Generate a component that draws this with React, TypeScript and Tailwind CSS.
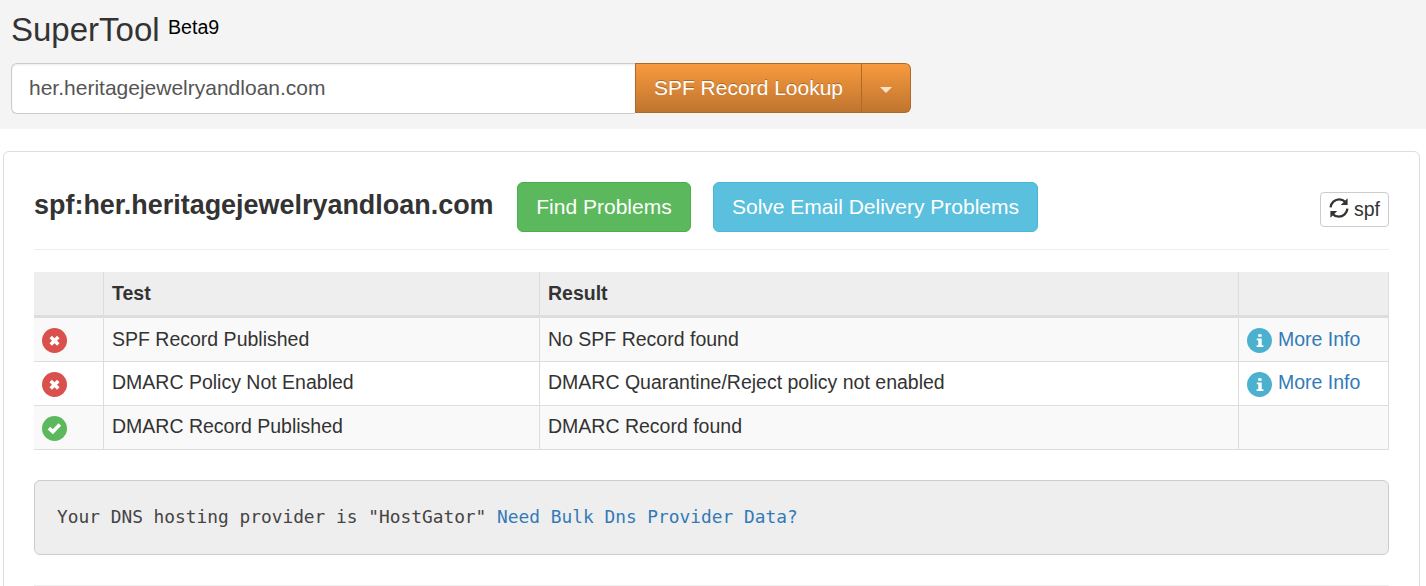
import React from "react";

function ErrorIcon() {
  return (
    <svg className="block size-[25px]" viewBox="0 0 25 25">
      <circle cx="12.5" cy="12.5" r="12.5" fill="#d9504c" />
      <path d="M8.7 8.9L16.3 16.5M16.3 8.9L8.7 16.5" stroke="#fff" strokeWidth="3.5" strokeLinecap="butt" />
    </svg>
  );
}

function SuccessIcon() {
  return (
    <svg className="block size-[25px]" viewBox="0 0 25 25">
      <circle cx="12.5" cy="12.5" r="12.5" fill="#5cb85c" />
      <path d="M6.9 12.1L10.9 15.8L17.8 8.6" fill="none" stroke="#fff" strokeWidth="3.6" />
    </svg>
  );
}

function InfoIcon() {
  return (
    <svg className="block size-[25px] shrink-0" viewBox="0 0 25 25">
      <circle cx="12.5" cy="12.5" r="12.5" fill="#4bb1cf" />
      <path d="M11.2 6.2h3.4v2.6h-3.4zM9.8 10.4h4.9v6.8h1.7v1.9H9.6v-1.9h1.7v-4.9H9.8z" fill="#fff" />
    </svg>
  );
}

function RefreshIcon() {
  return (
    <svg className="block size-5" viewBox="0 0 20 20" fill="none">
      <path d="M1.6 9.4C2 4.8 5.8 1.3 10.2 1.3C12.6 1.3 14.6 2.2 16 3.8M18.4 10.6C18 15.2 14.2 18.7 9.8 18.7C7.4 18.7 5.4 17.8 4 16.2" stroke="#333" strokeWidth="2.3" />
      <path d="M18.6 0.2V7H11.8zM1.4 19.8V13H8.2z" fill="#333" />
    </svg>
  );
}

const rows = [
  { ok: false, test: "SPF Record Published", result: "No SPF Record found", info: true },
  { ok: false, test: "DMARC Policy Not Enabled", result: "DMARC Quarantine/Reject policy not enabled", info: true },
  { ok: true, test: "DMARC Record Published", result: "DMARC Record found", info: false },
];

export default function App() {
  return (
    <div className="h-[586px] overflow-hidden bg-white font-['Liberation_Sans',Arial,sans-serif] text-[19.5px] text-[#333]">
      <header className="h-[129px] bg-[#f4f4f4] pl-[11px]">
        <div className="flex h-[63px] items-start">
          <h1 className="w-[148px] pt-[10px] text-[33px] leading-[40px]">SuperTool</h1>
          <span className="pt-[13px] pl-[9px] text-[19.6px] leading-7 text-black">Beta9</span>
        </div>
        <div className="flex">
          <input
            className="h-[51px] w-[624px] rounded-l-[6px] border border-r-0 border-[#ccc] bg-white pr-4 pb-[2px] pl-[17px] text-[21px] text-[#555] shadow-[inset_0_1px_2px_rgba(0,0,0,0.08)] outline-none"
            defaultValue="her.heritagejewelryandloan.com"
          />
          <button className="h-[50px] w-[227px] border border-[#af6a2b] bg-linear-to-b from-[#f89a3e] to-[#bf752f] text-[21px] text-white [text-shadow:0_-1px_0_rgba(0,0,0,0.25)]">
            SPF Record Lookup
          </button>
          <button className="flex h-[50px] w-[49px] items-center justify-center rounded-r-[6px] border border-l-0 border-[#af6a2b] bg-linear-to-b from-[#f89a3e] to-[#bf752f]">
            <svg className="mt-[4px] h-[6px] w-3" viewBox="0 0 12 6">
              <path d="M0 0H12L6 6Z" fill="#fbe3cb" />
            </svg>
          </button>
        </div>
      </header>

      <main className="mt-[22px] mr-[6px] ml-[3px] h-[500px] rounded-[6px] border border-[#ddd] px-[30px] pt-[30px]">
        <div className="flex h-[68px] items-start border-b border-[#eee]">
          <h2 className="w-[483px] pt-[7px] text-[26.95px] leading-[32px] font-bold">spf:her.heritagejewelryandloan.com</h2>
          <button className="h-[50px] w-[174px] rounded-[6px] border border-[#4cae4c] bg-[#5cb85c] text-[21px] text-white">Find Problems</button>
          <button className="ml-[22px] h-[50px] w-[325px] rounded-[6px] border border-[#46b8da] bg-[#5bc0de] text-[21px] text-white">Solve Email Delivery Problems</button>
          <button className="mt-[10px] ml-auto flex h-[35px] w-[69px] items-center gap-[5px] rounded-[4px] border border-[#ccc] bg-white pl-[8px]">
            <span className="pb-[3px]"><RefreshIcon /></span>
            <span>spf</span>
          </button>
        </div>

        <table className="mt-[22px] w-[1355px] table-fixed border-separate border-spacing-0 text-left">
          <colgroup>
            <col className="w-[70px]" />
            <col className="w-[436px]" />
            <col className="w-[699px]" />
            <col className="w-[150px]" />
          </colgroup>
          <thead>
            <tr className="h-[46px] bg-[#eee] align-top leading-7 *:border-r *:border-b-3 *:border-[#ddd] *:px-2 *:pt-[7px]">
              <th></th>
              <th>Test</th>
              <th>Result</th>
              <th></th>
            </tr>
          </thead>
          <tbody className="[&>tr:not(:first-child)>td]:leading-[26px]">
            {rows.map((row) => (
              <tr key={row.test} className="h-11 align-top leading-7 odd:bg-[#f9f9f9] *:border-r *:border-b *:border-[#ddd] *:px-2 *:pt-[7px]">
                <td>
                  <div className="pt-[3px]">{row.ok ? <SuccessIcon /> : <ErrorIcon />}</div>
                </td>
                <td>{row.test}</td>
                <td>{row.result}</td>
                <td>
                  {row.info && (
                    <a className="flex gap-[6px] text-[#337ab7]">
                      <span className="pt-[3px]"><InfoIcon /></span>
                      More Info
                    </a>
                  )}
                </td>
              </tr>
            ))}
          </tbody>
        </table>

        <pre className="mt-[30px] h-[75px] rounded-[6px] border border-[#ccc] bg-[#eee] pt-[22px] pl-[22px] font-['DejaVu_Sans_Mono',monospace] text-[17.83px] leading-7 text-[#444]">
          Your DNS hosting provider is "HostGator" <a className="text-[#337ab7]">Need Bulk Dns Provider Data?</a>
        </pre>
        <hr className="mt-[30px] border-[#eee]" />
      </main>
    </div>
  );
}
